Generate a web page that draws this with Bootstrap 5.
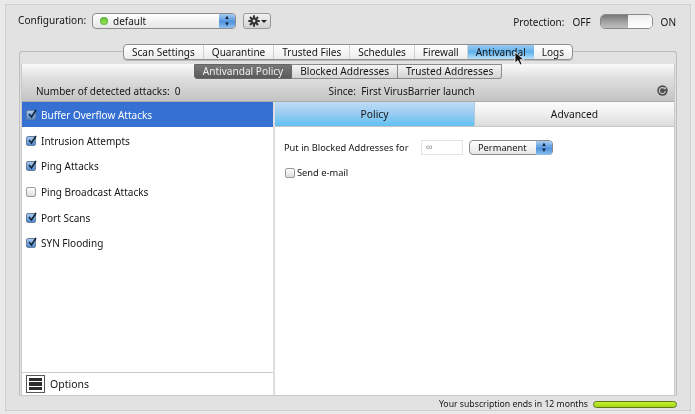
<!DOCTYPE html>
<html lang="en"><head><meta charset="utf-8"><title>VirusBarrier</title>
<link rel="stylesheet" href="https://cdn.jsdelivr.net/npm/bootstrap@5.3.0/dist/css/bootstrap.min.css">
<style>
html,body{height:414px;overflow:hidden}
body{background:#e9e9e9;font-family:"Noto Sans",sans-serif;font-size:10px;color:#151515;line-height:1.2;padding:4px 4px 3px 5px}
.frame{height:407px;border:1px solid #cfcfcf;background:#e2e2e2;padding:0 13px 0 13px;position:relative;filter:blur(.3px)}
.top-bar{height:39px;padding-top:8px}
.cfg-label{width:74px;margin-left:-1px;font-size:10.1px;padding-top:1px;white-space:nowrap}
.pop{height:16px;border:1px solid #8c8c8c;border-radius:4px;background:linear-gradient(#fff,#e6e6e6)}
.pop-main{width:144px}
.pop-arrows{width:16px;height:14px;background:linear-gradient(#a9cdf2,#4f93dd 55%,#8fc0ee);border-radius:0 3px 3px 0;color:#123;font-size:6px;line-height:6.5px;text-align:center;flex:none}
.led{width:8px;height:8px;border-radius:50%;background:radial-gradient(circle at 50% 60%,#9be55b,#3aa51e);margin:0 5px 0 7px;flex:none}
.gear{width:28px;height:16px;border:1px solid #999;border-radius:3px;background:linear-gradient(#f2f2f2,#d2d2d2);margin-left:7px}
.caret-mini{width:0;height:0;border-left:3px solid transparent;border-right:3px solid transparent;border-top:3px solid #222;margin-left:1px}
.proto{margin-right:1px;padding-top:1px}
.switch-box{width:53px;height:15px;border:1px solid #8a8a8a;border-radius:5px;overflow:hidden;background:#fff;margin:0 8px 0 9px}
.switch-off{width:27px;background:linear-gradient(#777,#a8a8a8 60%,#bdbdbd)}
.switch-on{flex:1;background:linear-gradient(#eee,#fff)}
.group-box{height:345px;margin-top:7px;border:1px solid #bdbdbd;border-bottom:0;border-radius:3px 3px 0 0;padding:12px 1px 0 1px;position:relative;width:658px}
.tabstrip{position:absolute;top:-8px;left:103px;height:16px;border:1px solid #8f8f8f;border-radius:4px;background:linear-gradient(#fff,#ececec);overflow:hidden;box-shadow:0 1px 0 #bbb}
.tabitem{padding:0 8px;border-right:1px solid #d2d2d2;display:flex;align-items:center;white-space:nowrap;font-size:10.03px}
.tabitem:last-child{border-right:0}
.tabitem.is-on{background:linear-gradient(#9cc9f0,#5fb0ea 50%,#b9e1fa);border-right:0}
.panel{height:332px;background:#fff;border:1px solid #c8c8c8;border-top:0;display:flex;flex-direction:column;width:654px}
.panel-head{height:38px;background:linear-gradient(#fafafa,#dedede 40%,#c4c4c4);border-bottom:1px solid #aaa;flex:none}
.segs{height:15px}
.seg{padding:0 8px;border:1px solid #8a8a8a;border-left:0;background:linear-gradient(#f5f5f5,#d3d3d3);display:flex;align-items:center;white-space:nowrap;font-size:10.1px}
.seg.is-on{background:linear-gradient(#777,#5a5a5a);color:#eee;border-color:#666;border-radius:0 0 0 3px;border-left:1px solid #666}
.seg:last-child{border-radius:0 0 3px 0}
.stat-line{height:23px;padding:0 6px 0 14px}
.since{margin-left:148px}
.refresh-ico{margin-left:auto;flex:none}
.panel-body{min-height:0}
.left-pane{width:253px;flex:none;border-right:2px solid #dedede}
.attack{height:25.6px;padding-left:4px;gap:5px;font-size:10px}
.attack.is-sel{background:#3570d2;color:#fff;height:25px;margin-bottom:1px}
.cbx{width:10px;height:10px;border:1px solid #9a9a9a;border-radius:2px;background:linear-gradient(#fff,#ddd);flex:none;position:relative}
.cbx.is-checked{background:linear-gradient(#a8c9ee,#4f8ad2);border-color:#6a7f9c}
.cbx.is-checked svg{position:absolute;left:0;top:-3px}
.opt-foot{height:23px;border-top:1px solid #ccc;padding-left:4px;gap:5px;font-size:10.5px}
.opt-icon{width:19px;height:18px;border:1px solid #555;padding:2px;display:flex;flex-direction:column;gap:1px}
.opt-icon span{flex:1;background:#2c2c2c}
.sub-tab{height:25px;flex:1;display:flex;align-items:center;justify-content:center;font-size:10.3px;background:linear-gradient(#fbfbfb,#f0f0f0 45%,#dcdcdc);border-bottom:1px solid #c6c6c6}
.sub-tab.is-on{background:linear-gradient(#bfdcf6,#9ccdf2 45%,#5fc0f0);border-right:1px solid #b5c9d8}
.form-area{padding:13px 9px;font-size:9.3px}
.put-label{width:137px}
.inf-input{width:42px;height:15px;border:1px solid #e4e4e4;margin-right:6px;color:#888;padding-left:4px;font-size:9px;line-height:12px}
.perm-pop{width:84px;height:15px}
.mail-line{margin-top:12px;gap:2px;font-size:9.3px;padding-left:1px}
.status{height:14px;padding-top:2px;font-size:8.7px;width:658px}
.meter{width:84px;height:7px;border:1px solid #5d7a1a;border-radius:4px;background:linear-gradient(#c6ee33,#a3d816);margin-left:5px;flex:none}
.cursor{position:absolute;left:508px;top:46px}
</style></head><body>
<div class="frame">
 <div class="top-bar d-flex align-items-start">
  <span class="cfg-label">Configuration:</span>
  <div class="pop pop-main d-flex align-items-center"><span class="led"></span><span class="flex-grow-1">default</span><span class="pop-arrows">▲<br>▼</span></div>
  <div class="gear d-flex align-items-center justify-content-center"><svg width="12" height="12" viewBox="0 0 12 12"><g fill="#333"><circle cx="6" cy="6" r="3.6"/><rect x="5" y="0.3" width="2" height="11.4"/><rect x="0.3" y="5" width="11.4" height="2"/><rect x="5" y="0.3" width="2" height="11.4" transform="rotate(45 6 6)"/><rect x="5" y="0.3" width="2" height="11.4" transform="rotate(-45 6 6)"/></g><circle cx="6" cy="6" r="1.4" fill="#ddd"/></svg><span class="caret-mini"></span></div>
  <div class="proto ms-auto d-flex align-items-center"><span>Protection:</span><span class="ms-2">OFF</span><div class="switch-box d-flex"><div class="switch-off"></div><div class="switch-on"></div></div><span>ON</span></div>
 </div>
 <div class="group-box">
  <div class="tabstrip d-flex">
   <div class="tabitem">Scan Settings</div><div class="tabitem">Quarantine</div><div class="tabitem">Trusted Files</div><div class="tabitem">Schedules</div><div class="tabitem">Firewall</div><div class="tabitem is-on">Antivandal</div><div class="tabitem">Logs</div>
  </div>
  <div class="panel">
   <div class="panel-head">
    <div class="segs d-flex justify-content-center"><div class="seg is-on">Antivandal Policy</div><div class="seg">Blocked Addresses</div><div class="seg">Trusted Addresses</div></div>
    <div class="stat-line d-flex align-items-center"><span>Number of detected attacks:&nbsp; 0</span><span class="since">Since:&nbsp; First VirusBarrier launch</span><svg class="refresh-ico" width="11" height="11" viewBox="0 0 11 11"><circle cx="5.5" cy="5.5" r="5.2" fill="#4d4d4d"/><path d="M7.8 3.7A3 3 0 1 0 8.4 6" fill="none" stroke="#c9c9c9" stroke-width="1.2"/><path d="M6.3 4.2h2.6V1.6z" fill="#c9c9c9"/></svg></div>
   </div>
   <div class="panel-body d-flex flex-grow-1">
    <div class="left-pane d-flex flex-column">
     <div class="flex-grow-1">
      <div class="attack is-sel d-flex align-items-center"><span class="cbx is-checked"><svg width="12" height="12" viewBox="0 0 12 12"><path d="M2 6l2.5 3L9 2" fill="none" stroke="#123" stroke-width="1.6"/></svg></span>Buffer Overflow Attacks</div>
      <div class="attack d-flex align-items-center"><span class="cbx is-checked"><svg width="12" height="12" viewBox="0 0 12 12"><path d="M2 6l2.5 3L9 2" fill="none" stroke="#123" stroke-width="1.6"/></svg></span>Intrusion Attempts</div>
      <div class="attack d-flex align-items-center"><span class="cbx is-checked"><svg width="12" height="12" viewBox="0 0 12 12"><path d="M2 6l2.5 3L9 2" fill="none" stroke="#123" stroke-width="1.6"/></svg></span>Ping Attacks</div>
      <div class="attack d-flex align-items-center"><span class="cbx"></span>Ping Broadcast Attacks</div>
      <div class="attack d-flex align-items-center"><span class="cbx is-checked"><svg width="12" height="12" viewBox="0 0 12 12"><path d="M2 6l2.5 3L9 2" fill="none" stroke="#123" stroke-width="1.6"/></svg></span>Port Scans</div>
      <div class="attack d-flex align-items-center"><span class="cbx is-checked"><svg width="12" height="12" viewBox="0 0 12 12"><path d="M2 6l2.5 3L9 2" fill="none" stroke="#123" stroke-width="1.6"/></svg></span>SYN Flooding</div>
     </div>
     <div class="opt-foot d-flex align-items-center"><div class="opt-icon"><span></span><span></span><span></span></div>Options</div>
    </div>
    <div class="flex-grow-1 d-flex flex-column">
     <div class="d-flex"><div class="sub-tab is-on">Policy</div><div class="sub-tab">Advanced</div></div>
     <div class="form-area">
      <div class="d-flex align-items-center"><span class="put-label">Put in Blocked Addresses for</span><span class="inf-input">∞</span><div class="pop perm-pop d-flex align-items-center ps-2"><span class="flex-grow-1">Permanent</span><span class="pop-arrows">▲<br>▼</span></div></div>
      <div class="mail-line d-flex align-items-center"><span class="cbx"></span>Send e-mail</div>
     </div>
    </div>
   </div>
  </div>
 </div>
 <div class="status d-flex justify-content-end align-items-center"><span>Your subscription ends in 12 months</span><div class="meter"></div></div>
 <svg class="cursor" width="12" height="16" viewBox="0 0 12 16"><path d="M1 1v11l3-2.5 2 4.5 2-1-2-4.3h4z" fill="#111" stroke="#fff" stroke-width=".8"/></svg>
</div>
</body></html>
